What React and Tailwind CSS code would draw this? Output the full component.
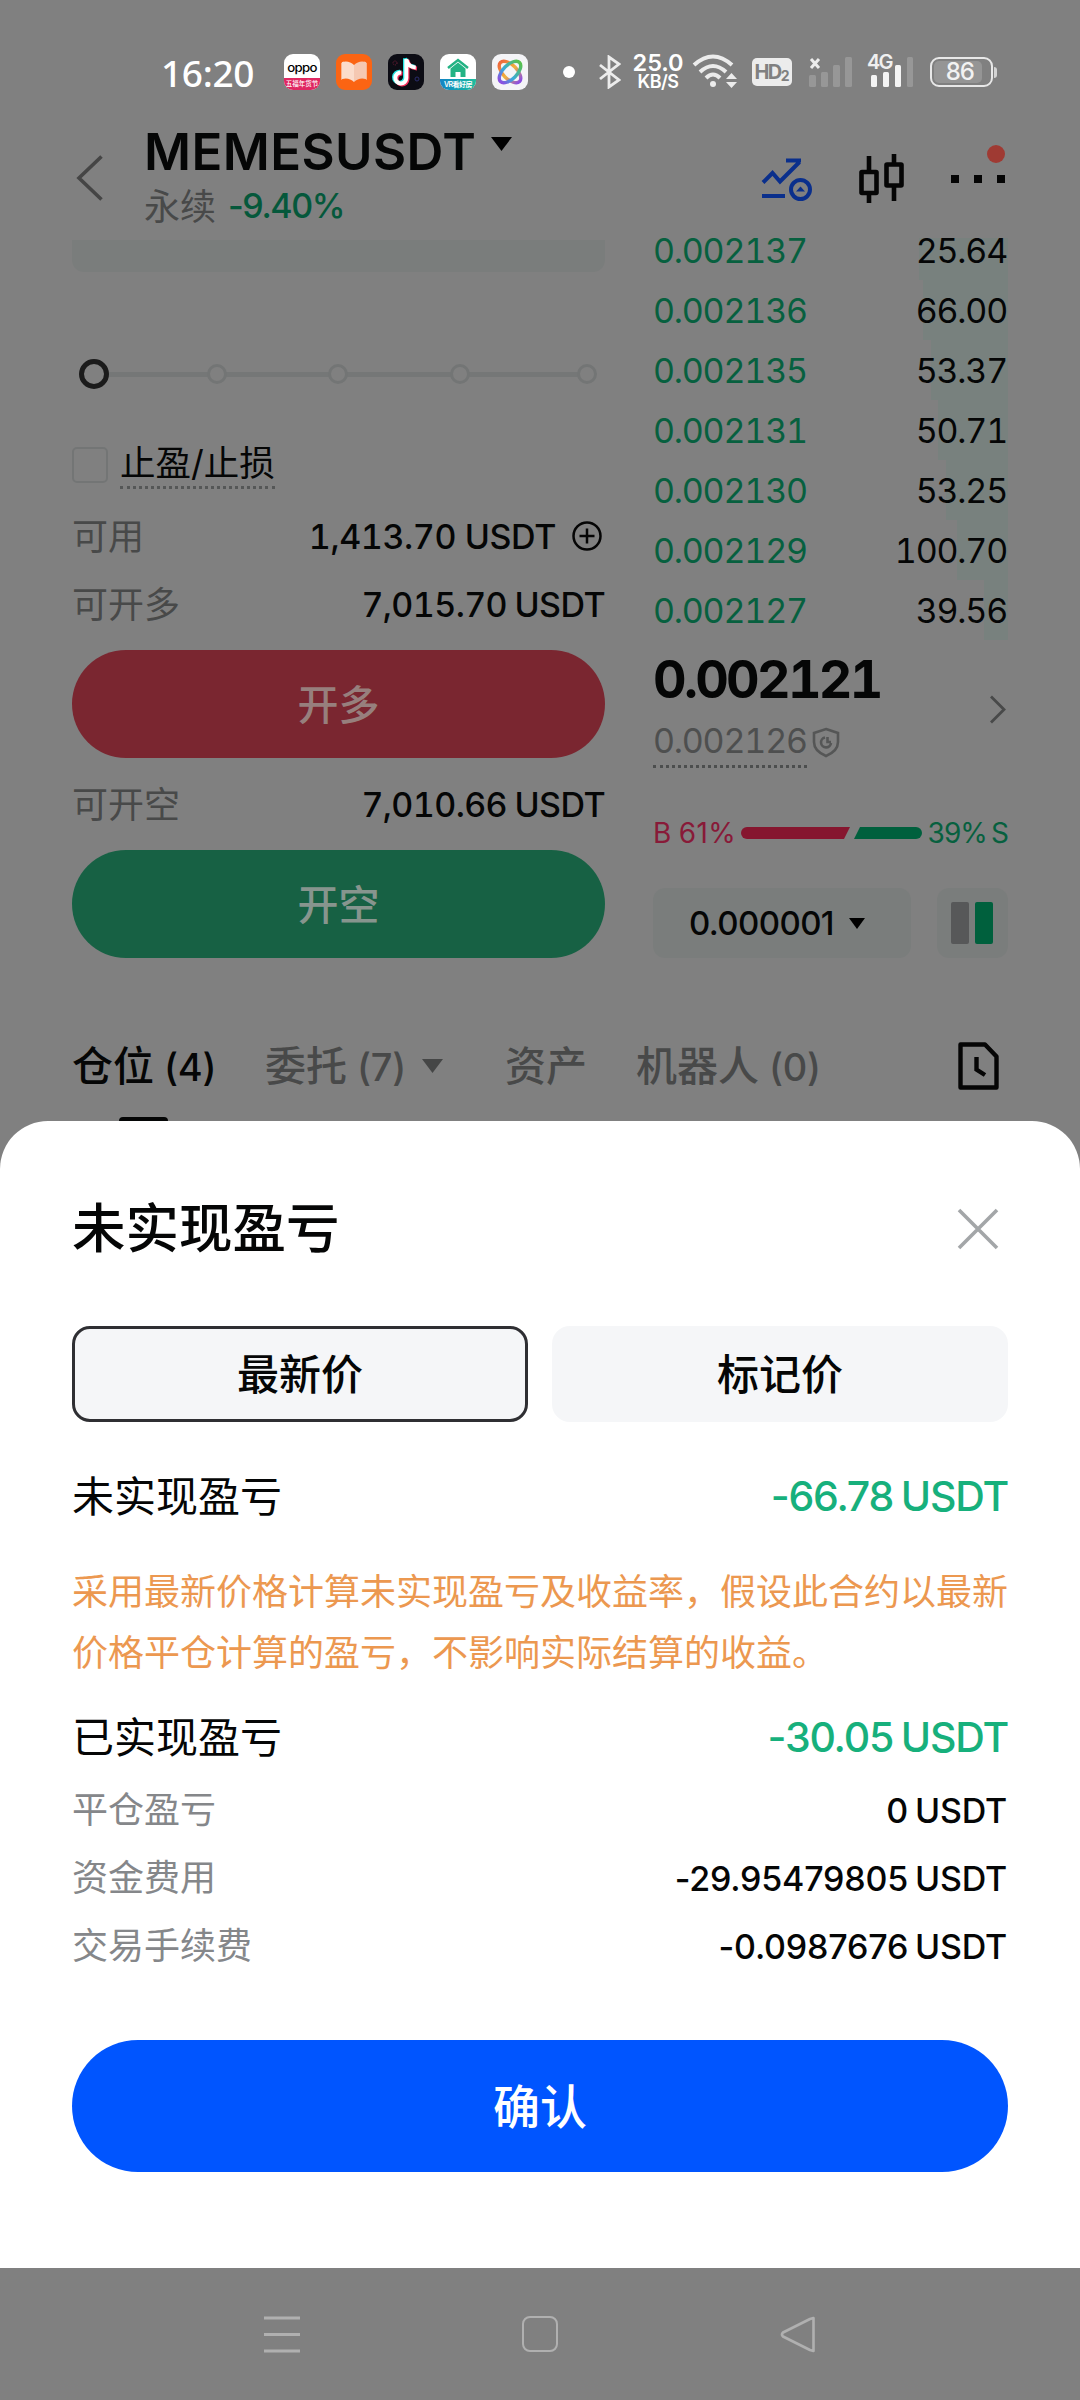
const asks = [
  { price: "0.002137", qty: "25.64", depth: "w-[89px]" },
  { price: "0.002136", qty: "66.00", depth: "w-[85px]" },
  { price: "0.002135", qty: "53.37", depth: "w-[77px]" },
  { price: "0.002131", qty: "50.71", depth: "w-[70px]" },
  { price: "0.002130", qty: "53.25", depth: "w-[62px]" },
  { price: "0.002129", qty: "100.70", depth: "w-[51px]" },
  { price: "0.002127", qty: "39.56", depth: "w-[24px]" },
];

const fees = [
  { label: "平仓盈亏", value: "0 USDT" },
  { label: "资金费用", value: "-29.95479805 USDT" },
  { label: "交易手续费", value: "-0.0987676 USDT" },
];

export default function App() {
  return (
    <div className="flex h-[2400px] w-[1080px] flex-col overflow-hidden bg-[#808080] font-['Inter','Noto_Sans_CJK_SC',sans-serif] text-[#050606]">
      <StatusBar />
      <Header />

      <main className="flex h-[720px] shrink-0 justify-between pr-[72px] pl-[72px]">
        <OrderForm />
        <OrderBook />
      </main>

      <PositionTabs />
      <PnlSheet />
      <NavBar />
    </div>
  );
}

function StatusBar() {
  return (
    <div className="flex h-[112px] shrink-0 items-center pt-8 pl-[161px] text-white">
      <span className="w-[123px] font-['Noto_Sans','Inter',sans-serif] text-[37px] leading-none font-medium tracking-[-0.3px]">
        16:20
      </span>

      <div className="flex gap-4">
        <OppoIcon />
        <BookIcon />
        <TiktokIcon />
        <HouseIcon />
        <KnotIcon />
      </div>

      <span className="ml-[35px] h-3 w-3 rounded-full bg-white" />

      <svg className="ml-[24px]" width="22" height="34" viewBox="0 0 22 34" fill="none" stroke="#ececec" strokeWidth="2.8">
        <path d="M1 10 L20 25 L10 32 V2 L20 9 L1 24" />
      </svg>

      <div className="ml-[12px] flex w-[50px] flex-col items-center font-semibold">
        <span className="text-[23.5px] leading-[20px] tracking-[-0.1px]">25.0</span>
        <span className="text-[18px] leading-[18px] tracking-[-0.5px]">KB/S</span>
      </div>

      <svg className="ml-[9px]" width="46" height="36" viewBox="0 0 46 36" fill="none" stroke="#ececec" strokeWidth="4">
        <path d="M2 11 Q21 -6 40 11" />
        <path d="M8 18 Q21 6 34 18" />
        <path d="M14 24 Q21 17 28 24" />
        <circle cx="21" cy="30" r="3" fill="#ececec" stroke="none" />
        <path d="M34 25 L39.500 19 L45 25 Z M34 28 L39.500 34 L45 28 Z" fill="#ececec" stroke="none" />
      </svg>

      <div className="ml-[14px] flex h-7 w-10 items-center justify-center rounded-[5px] bg-[#ececec] text-[#808080]">
        <span className="text-[20px] leading-none font-bold tracking-[-1.5px]">HD</span>
        <span className="mt-2 text-[14px] leading-none font-bold">2</span>
      </div>

      <svg className="ml-[17px]" width="44" height="36" viewBox="0 0 44 36">
        <path d="M2 5 L10 14 M10 5 L2 14" stroke="#ececec" strokeWidth="3" />
        <g fill="#979797">
          <rect x="0" y="21" width="7" height="12" rx="1.500" />
          <rect x="12" y="18" width="7" height="15" rx="1.500" />
          <rect x="24" y="11" width="7" height="22" rx="1.500" />
          <rect x="36" y="3" width="7" height="30" rx="1.500" />
        </g>
      </svg>

      <div className="relative ml-[14px] h-9 w-[47px]">
        <svg width="47" height="36" viewBox="0 0 47 36">
          <g fill="#f4f4f4">
            <rect x="4" y="21" width="6" height="12" rx="1.500" />
            <rect x="16" y="18" width="6" height="15" rx="1.500" />
            <rect x="28" y="11" width="6" height="22" rx="1.500" />
          </g>
          <rect x="40" y="3" width="6" height="30" rx="1.500" fill="#979797" />
        </svg>
        <span className="absolute top-0 left-0 text-[20px] leading-[17px] font-semibold tracking-[-1.8px] text-[#f0f0f0]">
          4G
        </span>
      </div>

      <div className="ml-[16px] flex items-center gap-[1px]">
        <div className="flex h-[30px] w-[63px] items-center rounded-[9px] border-[2.5px] border-[#e8e8e8] p-[2px]">
          <div className="flex h-full w-[48px] items-center justify-end rounded-[5px] bg-[#959595] pr-[8px]">
            <span className="text-[24px] leading-none font-medium tracking-[-1px] text-[#f2f2f2]">86</span>
          </div>
        </div>
        <span className="h-[11px] w-[3px] rounded-r bg-[#d4d4d4]" />
      </div>
    </div>
  );
}

function OppoIcon() {
  return (
    <div className="relative h-9 w-9 overflow-hidden rounded-[9px] bg-white text-center">
      <span className="block scale-x-110 pt-[5px] text-[12px] leading-[17px] font-medium tracking-[-0.6px] text-black">
        oppo
      </span>
      <div className="absolute bottom-0 h-3 w-9 bg-[#e02862] text-[6.5px] leading-[12px] font-medium whitespace-nowrap text-white">
        五福年货节
      </div>
    </div>
  );
}

function BookIcon() {
  return (
    <svg width="36" height="36" viewBox="0 0 36 36">
      <rect width="36" height="36" rx="9" fill="#fb6413" />
      <path d="M5 9 L8 7.500 V24 L5 26 Z M31 9 L28 7.500 V24 L31 26 Z" fill="#f9b48e" />
      <path d="M6 8 Q13 6 18 11 V28 Q13 23 6 25 Z" fill="#fbdccb" />
      <path d="M30 8 Q23 6 18 11 V28 Q23 23 30 25 Z" fill="#f5c8b2" />
    </svg>
  );
}

function TiktokIcon() {
  const note = "M17.500 5 V24 A5.500 5.500 0 1 1 12.500 18.500 M17.500 5 Q19 13 27 13.500";

  return (
    <svg width="36" height="36" viewBox="0 0 36 36" fill="none" strokeWidth="4">
      <rect width="36" height="36" rx="9" fill="#0c0c14" />
      <path d={note} stroke="#25e5e2" transform="translate(-0.500 -0.800)" />
      <path d={note} stroke="#f4305c" transform="translate(2 1)" />
      <path d={note} stroke="#ffffff" transform="translate(0.800 0)" />
      <circle cx="7" cy="9" r="2" stroke="#7c1f3a" strokeWidth="1" strokeDasharray="1 1" />
      <circle cx="29" cy="25" r="2" stroke="#2a2c6c" strokeWidth="1" />
    </svg>
  );
}

function HouseIcon() {
  return (
    <div className="relative h-9 w-9 overflow-hidden rounded-[9px] bg-white">
      <svg width="36" height="26" viewBox="0 0 36 26">
        <path d="M8 14 L18 6 L28 14" fill="none" stroke="#23b384" strokeWidth="2.500" />
        <path d="M10.500 14.500 L18 8.500 L25.500 14.500 V23 H20.500 V18 H15.500 V23 H10.500 Z" fill="#23b384" />
      </svg>
      <div className="absolute bottom-0 flex h-[11px] w-9 items-center justify-center bg-linear-to-r from-[#1583c4] to-[#20bd9c] text-[7px] leading-none font-semibold tracking-[-0.5px] whitespace-nowrap text-white">
        VR看好房
      </div>
    </div>
  );
}

function KnotIcon() {
  return (
    <svg width="36" height="36" viewBox="0 0 36 36" fill="none" strokeWidth="3.400">
      <defs>
        <linearGradient id="knotA" x1="0" y1="0" x2="0" y2="1">
          <stop offset="0" stopColor="#ee6a3c" />
          <stop offset="0.500" stopColor="#f1b23c" />
          <stop offset="1" stopColor="#8b4fe0" />
        </linearGradient>
        <linearGradient id="knotB" x1="0" y1="0" x2="0" y2="1">
          <stop offset="0" stopColor="#58c04f" />
          <stop offset="0.600" stopColor="#39a9dc" />
          <stop offset="1" stopColor="#8b4fe0" />
        </linearGradient>
      </defs>
      <rect width="36" height="36" rx="9" fill="#f4f4f7" />
      <ellipse cx="18" cy="18" rx="7" ry="13.500" transform="rotate(-45 18 18)" stroke="url(#knotA)" />
      <ellipse cx="18" cy="18" rx="7" ry="13.500" transform="rotate(45 18 18)" stroke="url(#knotB)" />
    </svg>
  );
}

function Header() {
  return (
    <header className="relative z-10 flex h-[126px] shrink-0 bg-[#808080] pr-[72px] pl-[76px]">
      <svg className="mt-[43px]" width="28" height="46" viewBox="0 0 28 46" fill="none" stroke="#454545" strokeWidth="3.600">
        <path d="M25.500 1.500 L3 23 L25.500 44.500" />
      </svg>

      <div className="ml-[40px] flex-1 pt-[11px]">
        <div className="flex h-14 items-center gap-[15px]">
          <h1 className="text-[51px] leading-none font-semibold tracking-[0.4px]">MEMESUSDT</h1>
          <svg className="mb-[14px]" width="21" height="14" viewBox="0 0 21 14">
            <path d="M0 0 H21 L10.500 14 Z" />
          </svg>
        </div>
        <div className="mt-[7px] flex h-10 items-center gap-[12px] leading-none">
          <span className="pt-0.5 text-[36px] text-[#484949]">永续</span>
          <span className="text-[34px] font-medium tracking-[-1.4px] text-[#05583b]">-9.40%</span>
        </div>
      </div>

      <div className="relative flex items-start">
        <svg className="mt-[45px]" width="52" height="44" viewBox="0 0 52 44" fill="none" stroke="#0a2f8c" strokeWidth="4">
          <path d="M2 25.500 L11.500 16 L19 24.500 L38.500 5 M25 3.500 H40" />
          <path d="M1 39 H24" />
          <circle cx="39.500" cy="32.500" r="9.500" />
          <path d="M35 34.500 L39.500 29.500 L44 34.500 Z" fill="#0a2f8c" stroke="none" />
        </svg>
        <svg className="mt-[42px] ml-[46px]" width="46" height="50" viewBox="0 0 46 50" fill="none" stroke="#050505" strokeWidth="4.600">
          <rect x="2.500" y="18" width="15" height="21" rx="0.500" />
          <rect x="27.500" y="10.500" width="15" height="21" rx="0.500" />
          <path d="M10 2 V18 M10 39 V49 M35 0 V10 M35 32 V47" />
        </svg>
        <svg className="mt-[63px] ml-[46px]" width="57" height="8" viewBox="0 0 57 8" fill="#050505">
          <rect x="0" y="0" width="8" height="8" />
          <rect x="23" y="0" width="8" height="8" />
          <rect x="46" y="0" width="8" height="8" />
        </svg>
        <span className="absolute top-[33px] right-[3px] h-[18px] w-[18px] rounded-full bg-[#9f3a33]" />
      </div>
    </header>
  );
}

function OrderForm() {
  return (
    <section className="flex w-[533px] flex-col">
      <div className="mt-0.5 h-8 shrink-0 rounded-b-xl bg-[#7a7d7c]" />

      <div className="relative mt-[87px] flex h-[30px] shrink-0 items-center pl-[7px]">
        <span className="absolute right-5 left-9 h-[5px] bg-[#757777]" />
        <span className="relative h-[30px] w-[30px] rounded-full border-[5px] border-[#1b1b1b] bg-[#808080]" />
        <SliderStop className="ml-[98px]" />
        <SliderStop className="ml-[101px]" />
        <SliderStop className="ml-[102px]" />
        <SliderStop className="ml-[107px]" />
      </div>

      <div className="mt-[52px] flex h-12 shrink-0 items-center">
        <span className="h-9 w-9 rounded-[5px] border-[2.5px] border-[#737575]" />
        <span className="ml-3 h-12 border-b-[3px] border-dotted border-[#555757] text-[35.5px] leading-[45px]">
          止盈/止损
        </span>
      </div>

      <div className="mt-[18px] flex h-[60px] shrink-0 items-center text-[34px]">
        <span className="flex-1 text-[36px] text-[#484949]">可用</span>
        <span className="pb-0.5 font-medium tracking-[-0.4px] tabular-nums">1,413.70 USDT</span>
        <svg className="mr-[3px] mb-0.5 ml-4" width="30" height="30" viewBox="0 0 30 30" fill="none" stroke="#050505" strokeWidth="2.500">
          <circle cx="15" cy="15" r="13.500" />
          <path d="M15 7.500 V22.500 M7.500 15 H22.500" />
        </svg>
      </div>

      <BalanceRow label="可开多" value="7,015.70 USDT" />
      <div className="mt-[15px] flex h-[108px] shrink-0 items-center justify-center rounded-full bg-[#7a2630] pt-[3px] text-[41px] font-medium text-[#977f7d]">
        开多
      </div>

      <div className="h-[9px] shrink-0" />
      <BalanceRow label="可开空" value="7,010.66 USDT" />
      <div className="mt-[15px] flex h-[108px] shrink-0 items-center justify-center rounded-full bg-[#176144] pt-[3px] text-[41px] font-medium text-[#87958e]">
        开空
      </div>
    </section>
  );
}

function SliderStop({ className }) {
  return (
    <span className={`relative h-5 w-5 rounded-full border-[3px] border-[#737575] bg-[#808080] ${className}`} />
  );
}

function BalanceRow({ label, value }) {
  return (
    <div className="mt-2 flex h-[60px] shrink-0 items-center justify-between text-[34px]">
      <span className="text-[36px] text-[#484949]">{label}</span>
      <span className="pb-px font-medium tracking-[-0.6px] tabular-nums [word-spacing:-1px]">{value}</span>
    </div>
  );
}

function OrderBook() {
  return (
    <section className="-mt-[18px] flex w-[355px] flex-col">
      {asks.map((ask) => (
        <div key={ask.price} className="relative flex h-[60px] shrink-0 items-center justify-between text-[34px]">
          <span className={`absolute right-0 h-full bg-[#78817e] ${ask.depth}`} />
          <span className="relative tracking-[-1.2px] text-[#07603f] tabular-nums">{ask.price}</span>
          <span className="relative pr-px tracking-[-1.2px] tabular-nums">{ask.qty}</span>
        </div>
      ))}

      <div className="flex items-center justify-between">
        <div>
          <p className="mt-[10px] h-[60px] text-[52px] leading-[60px] font-bold tracking-[-2.7px] tabular-nums">0.002121</p>
          <div className="mt-[5px] flex h-[53px] items-start gap-[5px]">
            <span className="h-[53px] border-b-[3px] border-dotted border-[#4c4e4e] text-[34px] leading-[52px] tracking-[-1.2px] text-[#4e4f4f] tabular-nums">
              0.002126
            </span>
            <svg className="mt-3" width="28" height="31" viewBox="0 0 28 31" fill="none" stroke="#555656" strokeWidth="2.600">
              <path d="M14 2 L26 6 V15 Q26 24 14 29 Q2 24 2 15 V6 Z" />
              <path d="M13 10.500 A5 5 0 1 0 19 16" />
              <path d="M15.500 10 V15 H19" />
            </svg>
          </div>
        </div>
        <svg className="mt-[10px] mr-[1px]" width="18" height="29" viewBox="0 0 18 29" fill="none" stroke="#484949" strokeWidth="2.800">
          <path d="M2 1.500 L15 14.500 L2 27.500" />
        </svg>
      </div>

      <div className="mt-[45px] flex h-10 shrink-0 items-center text-[28px] leading-none">
        <span className="w-[88px] tracking-[0.3px] text-[#881a38] [word-spacing:-1px]">B 61%</span>
        <svg width="181" height="12" viewBox="0 0 181 12">
          <path d="M6 0 H109 L103 12 H6 A6 6 0 0 1 6 0 Z" fill="#86162f" />
          <path d="M119 0 H175 A6 6 0 0 1 175 12 H113 Z" fill="#00603d" />
        </svg>
        <span className="ml-auto tracking-[-0.9px] text-[#07603f] [word-spacing:-3px]">39% S</span>
      </div>

      <div className="mt-[35px] flex h-[70px] shrink-0 justify-between">
        <div className="flex w-[258px] items-center gap-[15px] rounded-xl bg-[#7a7d7c] pl-[36px]">
          <span className="text-[33px] leading-none font-medium tracking-[-0.6px]">0.000001</span>
          <svg width="16" height="11" viewBox="0 0 16 11">
            <path d="M0 0 H16 L8 11 Z" />
          </svg>
        </div>
        <div className="flex w-[71px] items-center justify-center gap-[6px] rounded-xl bg-[#7a7d7c] pr-0.5">
          <span className="h-[42px] w-[18px] rounded-[2px] bg-[#575859]" />
          <span className="h-[42px] w-[18px] rounded-[2px] bg-[#00603d]" />
        </div>
      </div>
    </section>
  );
}

function PositionTabs() {
  return (
    <nav className="flex h-[163px] shrink-0 flex-col px-[72px] pt-[78px] text-[41px] leading-none font-medium text-[#484949]">
      <div className="flex h-[60px] items-center">
        <span className="w-[193px] text-[#050606]">
          仓位 <Count n={4} />
        </span>
        <span className="flex w-[240px] items-center">
          <span>
            委托 <Count n={7} />
          </span>
          <svg className="ml-[16px]" width="21" height="14" viewBox="0 0 21 14" fill="#454646">
            <path d="M0 0 H21 L10.500 14 Z" />
          </svg>
        </span>
        <span className="w-[131px]">资产</span>
        <span className="flex-1 whitespace-nowrap">
          机器人 <Count n={0} />
        </span>
        <svg className="mr-[9px]" width="41" height="48" viewBox="0 0 41 48" fill="none" stroke="#050505" strokeWidth="4.400">
          <path d="M2.500 2.500 H27 L38.500 14.500 V45.500 H2.500 Z" strokeLinejoin="round" />
          <path d="M18.500 15 V27.500 L27 33" />
        </svg>
      </div>
      <span className="mt-auto ml-[47px] h-1 w-[49px] rounded-t-[4px] bg-[#050606]" />
    </nav>
  );
}

function Count({ n }) {
  return <span className="-ml-px text-[38px] tracking-[-0.2px]">({n})</span>;
}

function PnlSheet() {
  return (
    <section className="flex h-[1147px] shrink-0 flex-col rounded-t-[48px] bg-white px-[72px]">
      <div className="mt-[76px] flex h-[64px] items-center justify-between">
        <h2 className="text-[53.5px] leading-none font-medium">未实现盈亏</h2>
        <svg className="mr-[9px]" width="42" height="42" viewBox="0 0 42 42" stroke="#a3a6a8" strokeWidth="3.600">
          <path d="M2 2 L40 40 M40 2 L2 40" />
        </svg>
      </div>

      <div className="mt-[65px] grid h-[96px] grid-cols-2 gap-6 text-[42px] font-medium">
        <div className="flex items-center justify-center rounded-[18px] border-[3px] border-[#2f2f33] bg-[#f5f6f8] pt-px">最新价</div>
        <div className="flex items-center justify-center rounded-[18px] bg-[#f5f6f8] pt-px">标记价</div>
      </div>

      <TotalRow label="未实现盈亏" value="-66.78 USDT" className="mt-[44px]" />

      <p className="mt-[36px] text-[36px] leading-[61px] whitespace-nowrap text-[#ec9850]">
        采用最新价格计算未实现盈亏及收益率，假设此合约以最新
        <br />
        价格平仓计算的盈亏，不影响实际结算的收益。
      </p>

      <TotalRow label="已实现盈亏" value="-30.05 USDT" className="mt-[23px]" />

      <div className="mt-[9px]">
        {fees.map((fee) => (
          <div key={fee.label} className="flex h-[68px] items-center justify-between">
            <span className="text-[36px] text-[#85878a]">{fee.label}</span>
            <span className="pr-px text-[34px] font-medium tracking-[-0.2px] [word-spacing:-2px]">{fee.value}</span>
          </div>
        ))}
      </div>

      <button className="mt-[60px] h-[132px] rounded-full bg-[#0055ff] pt-0.5 text-[47px] font-medium text-white">
        确认
      </button>
    </section>
  );
}

function TotalRow({ label, value, className }) {
  return (
    <div className={`flex h-[60px] items-center justify-between ${className}`}>
      <span className="text-[42px]">{label}</span>
      <span className="pt-0.5 text-[41px] font-medium tracking-[-1.2px] text-[#17b07c] [word-spacing:-2px]">{value}</span>
    </div>
  );
}

function NavBar() {
  return (
    <div className="flex h-[132px] items-center justify-center gap-[222px]">
      <svg width="36" height="37" viewBox="0 0 36 37" stroke="#b0b0b0" strokeWidth="3">
        <path d="M0 2 H36 M0 18.500 H36 M0 35 H36" />
      </svg>
      <span className="h-9 w-9 rounded-[8px] border-[2.5px] border-[#b0b0b0]" />
      <svg width="36" height="37" viewBox="0 0 36 37" fill="none" stroke="#b0b0b0" strokeWidth="2.600" strokeLinejoin="round">
        <path d="M33.500 2 V35 L30 34 L3 20.500 Q1 18.500 3 16.500 L30 3 Z" />
      </svg>
    </div>
  );
}
